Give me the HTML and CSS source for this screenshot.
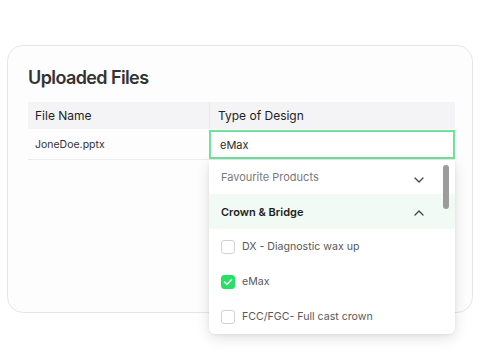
FILE: index.html
```html
<!DOCTYPE html>
<html>
<head>
<meta charset="utf-8">
<link rel="stylesheet" href="styles.css">
</head>
<body>
<div class="card">
  <h1 class="title">Uploaded Files</h1>
  <div class="table">
    <div class="head">
      <div class="cell c1">File Name</div>
      <div class="cell c2">Type of Design</div>
    </div>
    <div class="row">
      <div class="cell c1 name">JoneDoe.pptx</div>
      <div class="cell c2 select-wrap">
        <div class="input">eMax</div>
        <div class="dropdown">
          <div class="group fav">
            <span>Favourite Products</span>
            <svg class="chev" width="10" height="6" viewBox="0 0 10 6"><path d="M1 1l4 4 4-4" fill="none" stroke="#444" stroke-width="1.3" stroke-linecap="round" stroke-linejoin="round"/></svg>
          </div>
          <div class="group open">
            <span>Crown &amp; Bridge</span>
            <svg class="chev" width="10" height="6" viewBox="0 0 10 6"><path d="M1 5l4-4 4 4" fill="none" stroke="#444" stroke-width="1.3" stroke-linecap="round" stroke-linejoin="round"/></svg>
          </div>
          <div class="opt"><span class="box"></span><span>DX - Diagnostic wax up</span></div>
          <div class="opt"><span class="box on"><svg width="10" height="8" viewBox="0 0 10 8"><path d="M1.5 4l2.5 2.3L8.5 1.7" fill="none" stroke="#fff" stroke-width="1.6" stroke-linecap="round" stroke-linejoin="round"/></svg></span><span>eMax</span></div>
          <div class="opt"><span class="box"></span><span>FCC/FGC- Full cast crown</span></div>
          <div class="scroll"></div>
        </div>
      </div>
    </div>
  </div>
</div>
</body>
</html>
```
FILE: styles.css
```css
* { box-sizing: border-box; }
html, body { margin: 0; padding: 0; background: #fff; }
body {
  font-family: Inter, "Noto Sans", sans-serif;
  width: 485px;
  height: 360px;
  overflow: hidden;
}
.card {
  margin: 45px 0 0 7px;
  width: 466px;
  height: 268px;
  border: 1px solid #e6e6e6;
  border-radius: 16px;
  background: #fdfdfd;
  padding: 19px 17px 0 20px;
}
.title {
  margin: 0;
  font-size: 18px;
  line-height: 26px;
  font-weight: 600;
  color: #333;
  letter-spacing: -0.6px;
}
.table {
  margin-top: 11px;
  width: 427px;
}
.head {
  display: flex;
  background: #f4f3f6;
  height: 27px;
}
.head .cell {
  font-size: 12px;
  font-weight: 400;
  color: #1f1f1f;
  display: flex;
  align-items: center;
  padding-left: 7px;
}
.c1 { width: 181px; }
.c2 { width: 246px; }
.head .c2 { border-left: 1px solid #e8e8ec; padding-left: 8px; }
.row {
  display: flex;
  height: 31px;
  border-bottom: 1px solid #ececec;
}
.name {
  display: flex;
  align-items: center;
  padding-left: 7px;
  font-size: 10.5px;
  color: #333;
}
.select-wrap { position: relative; padding-top: 1px; }
.input {
  height: 29px;
  border: 2px solid #6fe39c;
  background: #fff;
  display: flex;
  align-items: center;
  padding-left: 9px;
  font-size: 11px;
  color: #2a2a2a;
}
.dropdown {
  position: absolute;
  top: 31px;
  left: 0;
  width: 246px;
  height: 174px;
  background: #fff;
  border-radius: 0 0 6px 6px;
  box-shadow: 0 4px 14px rgba(0,0,0,0.12), 0 1px 3px rgba(0,0,0,0.06);
  overflow: hidden;
}
.group {
  height: 34px;
  display: flex;
  align-items: center;
  justify-content: space-between;
  padding: 0 31px 0 12px;
  font-size: 11px;
}
.fav { color: #7a7a7a; }
.fav .chev { margin-top: 6px; }
.open {
  height: 35px;
  background: #f1faf4;
  color: #1f1f1f;
  font-weight: 600;
}
.open .chev { margin-top: 2px; }
.opt {
  height: 35px;
  display: flex;
  align-items: center;
  gap: 7px;
  padding-left: 12px;
  font-size: 10.6px;
  color: #585858;
}
.box {
  width: 14px;
  height: 14px;
  border: 1px solid #d2d2d2;
  border-radius: 3px;
  background: #fff;
  display: flex;
  align-items: center;
  justify-content: center;
}
.box.on { background: #27e066; border-color: #27e066; }
.scroll {
  position: absolute;
  top: 5px;
  right: 6px;
  width: 6px;
  height: 44px;
  border-radius: 3px;
  background: #9c9c9c;
}
```
